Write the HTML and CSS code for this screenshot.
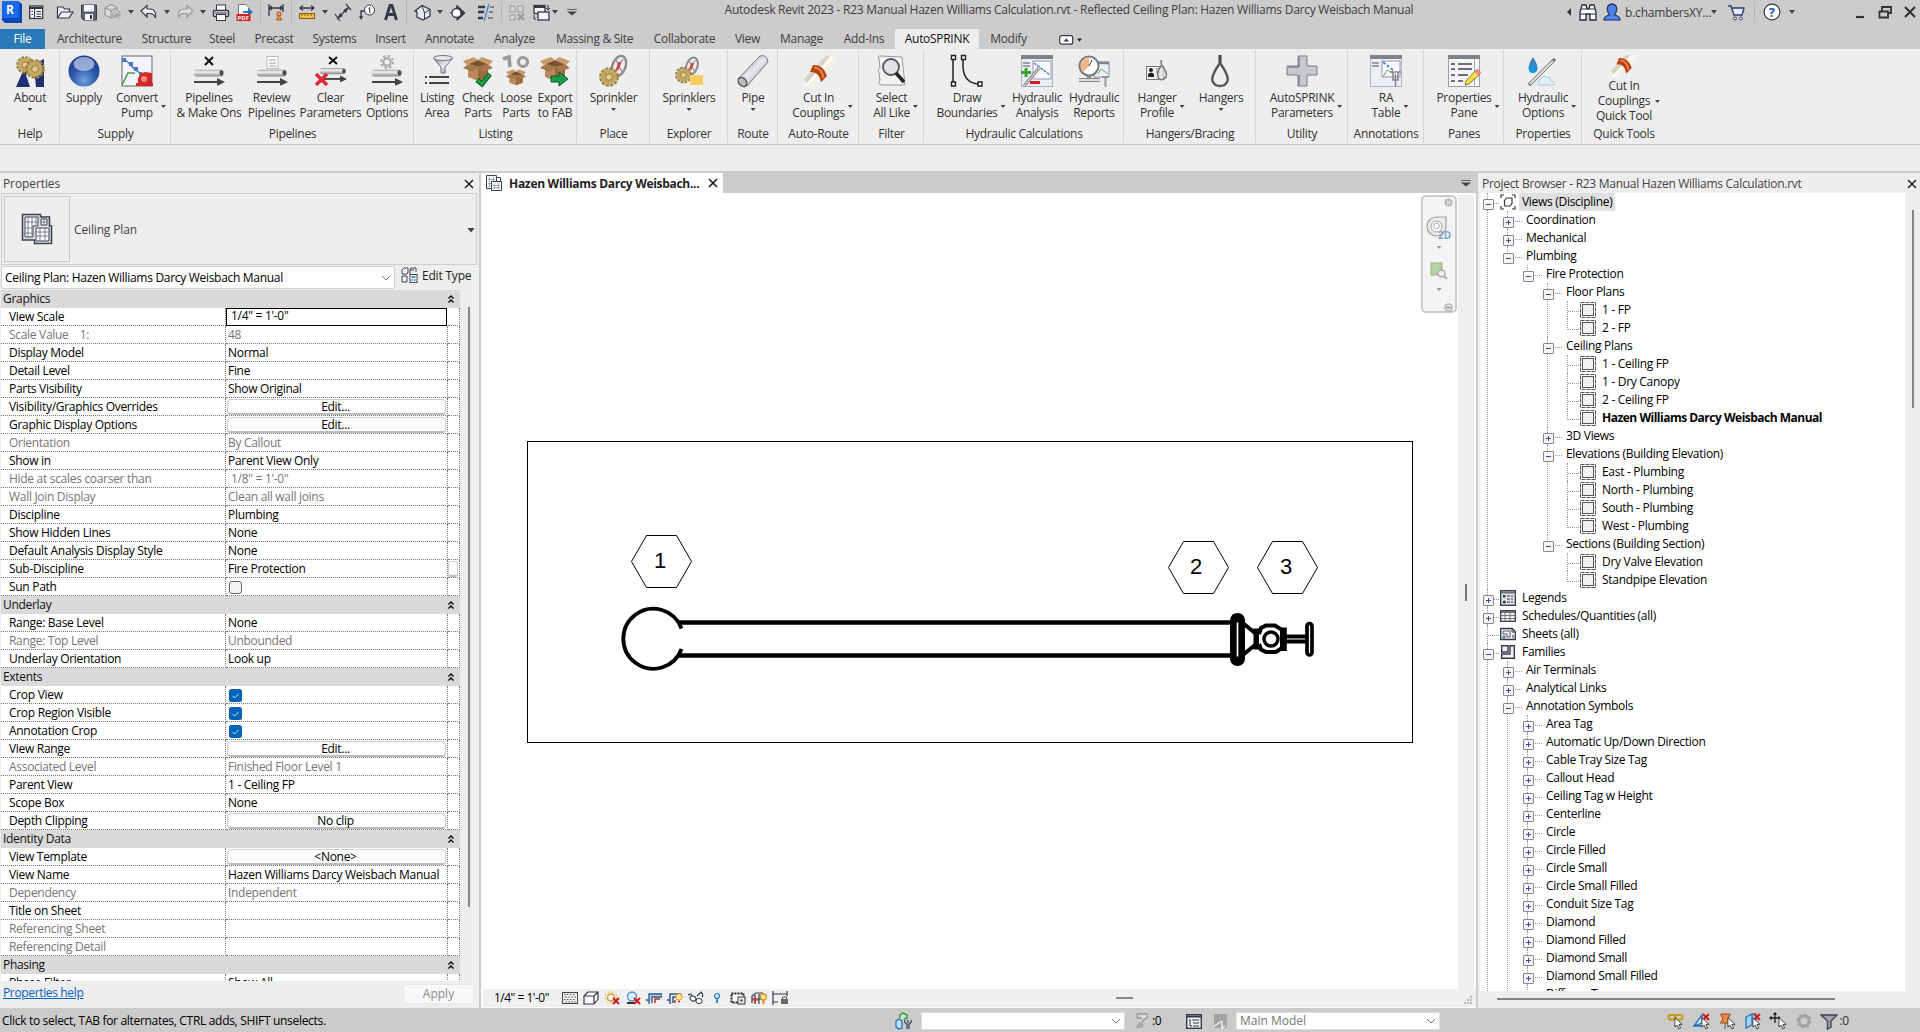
FILE: index.html
```html
<!DOCTYPE html>
<html lang="en">
<head>
<meta charset="utf-8">
<title>Autodesk Revit 2023</title>
<link rel="stylesheet" href="styles.css">
</head>
<body>
<svg class="defs" width="0" height="0" aria-hidden="true">
  <defs>
    <linearGradient id="gPipe" x1="0" y1="0" x2="0" y2="1"><stop offset="0" stop-color="#999"/><stop offset=".35" stop-color="#f4f4f4"/><stop offset="1" stop-color="#888"/></linearGradient>
    <linearGradient id="gTube" x1="0" y1="0" x2="1" y2="1"><stop offset="0" stop-color="#8d8f93"/><stop offset=".5" stop-color="#e9eaee"/><stop offset="1" stop-color="#85878c"/></linearGradient>
    <radialGradient id="gBall" cx=".5" cy=".8" r=".8"><stop offset="0" stop-color="#6fa3e0"/><stop offset=".5" stop-color="#2c57a8"/><stop offset="1" stop-color="#1c3a86"/></radialGradient>
    <linearGradient id="gDrop" x1="0" y1="0" x2="0" y2="1"><stop offset="0" stop-color="#4a7fae"/><stop offset="1" stop-color="#0a9be0"/></linearGradient>
    <symbol id="pipe" viewBox="0 0 32 16"><rect x="1" y="0" width="29" height="7" rx="2.500" fill="url(#gPipe)"/><ellipse cx="28.500" cy="3.500" rx="2" ry="3" fill="#444" stroke="#aaa" stroke-width=".7"/><path d="M1 12.500H26" stroke="#444" stroke-width="2.200"/><path d="M24 8.500L32 12.500L24 16.500Z" fill="#444"/></symbol>
    <symbol id="box" viewBox="0 0 32 30"><path d="M6 9L16 12L26 9V22L16 26L6 22Z" fill="#b98a5c"/><path d="M16 12L26 9V22L16 26Z" fill="#9a6b3f"/><path d="M6 9L16 5L26 9L16 12Z" fill="#7c5330"/><path d="M1 6L12 2L16 5L5 10ZM31 6L20 2L16 5L27 10Z" fill="#c79a6c"/><path d="M5 10L16 12L11 17L1 13ZM27 10L16 12L21 17L31 13Z" fill="#a87747"/></symbol>
    <symbol id="gear" viewBox="0 0 24 24"><circle cx="12" cy="12" r="9.500" fill="#c3a763"/><circle cx="12" cy="12" r="10.500" fill="none" stroke="#9c8240" stroke-width="2.600" stroke-dasharray="4.100 1.400"/><circle cx="12" cy="12" r="4" fill="#e0cb8c" stroke="#8b7337"/></symbol>
    <symbol id="ring" viewBox="0 0 20 26"><ellipse cx="11" cy="12" rx="6.500" ry="10.500" transform="rotate(20 11 12)" fill="#eee" stroke="#8b8b8b" stroke-width="2.400"/><path d="M7 4L15 20M15 5L7 19" stroke="#999" stroke-width="1.500"/><path d="M12 8L9 16" stroke="#d33" stroke-width="2.600"/></symbol>
    <symbol id="coupling" viewBox="0 0 32 32"><path d="M1 24L24 0H32V7L8 32H1Z" fill="#f4f2e2"/><path d="M1 24L24 0L27 1.500L4 28Z" fill="#d6d4c0"/><path d="M4 30L29 3" stroke="#fff" stroke-width="2"/><path d="M10 10Q20 9 24 21L18 27Q16 16 7 17Z" fill="#b8410f"/><path d="M11 12.500Q19 13 20.500 23" stroke="#e98450" stroke-width="2" fill="none"/></symbol>
    <symbol id="cursor" viewBox="0 0 10 14"><path d="M1 .5V11L3.500 8.800L5.300 13L7.300 12.100L5.500 8H9Z" fill="#fff" stroke="#333"/></symbol>
    <symbol id="redx" viewBox="0 0 8 8"><path d="M1 1L7 7M7 1L1 7" stroke="#d01818" stroke-width="2"/></symbol>
    <symbol id="view" viewBox="0 0 16 16"><rect x=".5" y=".5" width="15" height="15" fill="none" stroke="#555" stroke-dasharray="4 1"/><rect x="2.500" y="2.500" width="11" height="11" fill="#f1f1f1" stroke="#555"/></symbol>
    <symbol id="chev" viewBox="0 0 8 10"><path d="M1.500 4.500L4 2L6.500 4.500M1.500 8.500L4 6L6.500 8.500" fill="none" stroke="#000" stroke-width="1.300"/></symbol>
    <symbol id="plan" viewBox="0 0 32 32"><path d="M1.500 1.500H19.500V4H28.500V13H30.500V30.500H13.500V27H1.500Z" fill="#dfe3ea" stroke="#3d4351" stroke-width="1.600"/><path d="M4 4H17V13H12V24H4ZM20 6H26V12H20ZM15 15H28V28H15Z" fill="#f8f8fa" stroke="#3d4351"/><path d="M7 4V24M11 4V24M15 4V13M4 9H17M4 15H12M4 20H12M23 6V12M20 9H26M19 15V28M24 15V28M15 19H28M15 23H28" stroke="#737884" stroke-width=".9"/></symbol>
    <symbol id="plansm" viewBox="0 0 16 16"><path d="M.5.500H10.500V2.500H14.500V6.500H15.500V15.500H5.500V13.500H.5Z" fill="#f4f5f8" stroke="#3d4351"/><path d="M5.500 13V6.500H15M10.500 2.500V6.500" fill="none" stroke="#3d4351"/><path d="M3.500 2V12M7.500 2V6M2 4.500H9M2 8.500H5M8.500 8V14M12.500 8V14M7 10.500H14M7 12.800H14" stroke="#9a9eaa" stroke-width=".8"/></symbol>
    <symbol id="combo" viewBox="0 0 10 6"><path d="M1 1L5 5L9 1" fill="none" stroke="#777"/></symbol>
  </defs>
</svg>

<header class="titlebar">
  <div class="qat">
    <svg class="logo" viewBox="0 0 20 23"><path d="M0 1H16L20 4V23H3L0 20Z" fill="#0b49b5"/><rect x="0" y="1" width="17" height="17" fill="#1769ee"/><text x="4" y="14" font-size="12" font-weight="700" fill="#fff">R</text></svg>
    <svg viewBox="0 0 20 20"><rect x="3.700" y="4" width="13" height="12.500" fill="#f4f4f4" stroke="#333a46" stroke-width="1.300"/><path d="M4 6H17" stroke="#333a46" stroke-width="2"/><path d="M8.500 7V16M10.500 9.500H15M10.500 12H15M10.500 14.500H15M5.500 9.500H7M5.500 12.500H7" stroke="#333a46"/></svg>
    <svg class="gap5" viewBox="0 0 20 20"><path d="M2.500 16V5H8L9.500 7H14.500V10M2.500 16L6.500 10H18L14 16Z" fill="#eef0f4" stroke="#333a46" stroke-width="1.200"/></svg>
    <svg viewBox="0 0 20 20"><path d="M2.500 3H17.500V18H4.500L2.500 16Z" fill="#5b6270" stroke="#333a46"/><rect x="5" y="3" width="10" height="6.500" fill="#f5f5f5"/><rect x="6" y="12" width="8" height="6" fill="#fff"/><rect x="11" y="13" width="2" height="4" fill="#333"/></svg>
    <svg viewBox="0 0 20 20"><path d="M2 6L8 2.500L14 6V13L8 16L2 13ZM2 6L8 9L14 6M8 9V16" fill="#ddd" stroke="#8c8c8c"/><circle cx="13.500" cy="13" r="4.500" fill="#a6a6a6"/><path d="M11 13A2.500 2.500 0 0 1 16 12M16 14A2.500 2.500 0 0 1 11 15" stroke="#e6e6e6" fill="none"/></svg>
    <i class="arr"></i>
    <svg viewBox="0 0 20 20"><path d="M2 9L8 3.500V7H12Q17.500 8 16.500 16Q15 11.500 11 11.500H8V15Z" fill="#f2f2f2" stroke="#333a46" stroke-width="1.200"/></svg>
    <i class="arr"></i>
    <svg viewBox="0 0 20 20"><path d="M18 9L12 3.500V7H8Q2.500 8 3.500 16Q5 11.500 9 11.500H12V15Z" fill="#ddd" stroke="#999" stroke-width="1.200"/></svg>
    <i class="arr"></i>
    <svg viewBox="0 0 20 20"><rect x="5.500" y="3" width="9" height="6" fill="#fff" stroke="#333a46"/><rect x="2.500" y="8.500" width="15" height="6" rx="1" fill="#e8e8e8" stroke="#333a46" stroke-width="1.500"/><rect x="5.500" y="12.500" width="9" height="6" fill="#fff" stroke="#333a46"/><path d="M4 11H16" stroke="#333"/></svg>
    <svg viewBox="0 0 20 20"><path d="M3.500 2.500H11L14 5.500V18H3.500Z" fill="#fff" stroke="#777"/><path d="M8 9H13V6L18 10L13 14V11H8Z" fill="#1b79c0"/><rect x="1.500" y="12" width="14" height="7" fill="#d32020"/><text x="2.500" y="18" font-size="6" font-weight="700" fill="#fff">PDF</text></svg>
    <i class="vsep"></i>
    <svg viewBox="0 0 20 20"><path d="M3 2V14M17 2V10M3 6H17M6 4L3 6L6 8M14 4L17 6L14 8" fill="none" stroke="#333a46" stroke-width="1.300"/><circle cx="13" cy="12" r="1.800" fill="none" stroke="#cf5a2a" stroke-width="1.500"/><path d="M10 18H16L13 13Z" fill="#e48a2a" stroke="#b5521a" stroke-width=".8"/></svg>
    <i class="vsep"></i>
    <svg viewBox="0 0 20 20"><path d="M3 6H17M6 3.500L3 6L6 8.500M14 3.500L17 6L14 8.500" fill="none" stroke="#333a46" stroke-width="1.300"/><rect x="2.500" y="11.500" width="15" height="5" fill="#f5c14e" stroke="#8a5d0a"/><path d="M5 12V14M8 12V14M11 12V14M14 12V14" stroke="#8a5d0a"/></svg>
    <i class="arr"></i>
    <svg viewBox="0 0 20 20"><path d="M4 17L16 5M2 12L7 19M13 2L18 8" stroke="#333a46" stroke-width="1.200"/><path d="M4 17L10 14L7 11ZM16 5L10 8L13 11Z" fill="#333a46"/></svg>
    <svg viewBox="0 0 20 20"><path d="M4 17V9H8" fill="none" stroke="#333a46" stroke-width="1.300"/><circle cx="12.500" cy="8" r="5" fill="#fff" stroke="#333a46"/><path d="M11.500 6.500L12.800 5.500V11" stroke="#333" fill="none"/><path d="M2 14L4 18L6 14Z" fill="#333a46"/></svg>
    <svg viewBox="0 0 20 20"><path d="M4.500 18L9 3.500H11L15.500 18M6.500 12.500H14" fill="none" stroke="#333a46" stroke-width="2.800"/></svg>
    <i class="vsep"></i>
    <svg viewBox="0 0 20 20"><path d="M3 9L10 3.500L18 7.500V14L11 18L5 15V10Z" fill="#e4e7ee" stroke="#333a46" stroke-width="1.300"/><path d="M3 9L10 3.500L12.500 11V17M12.500 11L18 7.500" fill="none" stroke="#333a46"/></svg>
    <i class="arr"></i>
    <svg viewBox="0 0 20 20"><path d="M2 11H6M9 3L9 7M9 3.500L17 11L9 18.500Z" fill="#333a46" stroke="#333a46"/><circle cx="8.500" cy="11" r="4.500" fill="#fff" stroke="#333a46" stroke-width="1.300"/></svg>
    <svg class="gap1" viewBox="0 0 20 20"><path d="M2 5H9M2 10H8M2 16H7" stroke="#333a46" stroke-width="2.600"/><path d="M14 5H18M13 10H17M12 16H17" stroke="#333a46"/><path d="M13 2L8 19" stroke="#3b8bd0" stroke-width="1.300"/></svg>
    <i class="vsep"></i>
    <svg viewBox="0 0 20 20"><path d="M3 4H8V10H3ZM11 4H16V10H11ZM3 13H8V18H3Z" fill="#d8d8d8" stroke="#999"/><path d="M11 12L17 18M17 12L11 18" stroke="#999" stroke-width="2"/></svg>
    <svg viewBox="0 0 20 20"><rect x="3" y="3.500" width="11" height="8" fill="#f4f4f4" stroke="#333a46" stroke-width="1.300"/><path d="M3 5H14" stroke="#333a46" stroke-width="2"/><rect x="7" y="10" width="11" height="8" fill="#f4f4f4" stroke="#333a46" stroke-width="1.300"/><path d="M17 3V8M15 6L17 8L19 6M3 13V17H5" fill="none" stroke="#333a46"/></svg>
    <i class="arr tight"></i>
    <i class="arr bar"></i>
  </div>
  <div class="apptitle"><span>Autodesk Revit 2023 - R23 Manual Hazen Williams Calculation.rvt - Reflected Ceiling Plan: Hazen Williams Darcy Weisbach Manual</span></div>
  <div class="account">
    <svg class="tri" viewBox="0 0 6 10"><path d="M5 1V9L1 5Z" fill="#333"/></svg>
    <svg class="i18" viewBox="0 0 18 18"><path d="M1 17V9L3 2H7L8 6H10L11 2H15L17 9V17H11V11H7V17Z" fill="#fff" stroke="#222a38" stroke-width="1.300"/><path d="M1 11H7M11 11H17M2 6H7M11 6H16" stroke="#222a38"/></svg>
    <svg class="i18 user" viewBox="0 0 18 18"><path d="M1 17Q1 13 6.500 12Q3 7 5 3Q9-1 13 3Q15 7 11.500 12Q17 13 17 17Z" fill="#4f83e8" stroke="#1d2e66" stroke-width="1.200"/></svg>
    <span class="uname">b.chambersXY...</span><i class="arr"></i>
    <svg class="i18 cart" viewBox="0 0 18 18"><path d="M1 3H4L7 12H15L17 5H5" fill="#e8ecf8" stroke="#2c3a78" stroke-width="1.400"/><circle cx="8" cy="15.500" r="1.500" fill="#fff" stroke="#2c3a78"/><circle cx="14" cy="15.500" r="1.500" fill="#fff" stroke="#2c3a78"/></svg>
    <i class="vsep"></i>
    <svg class="i18 help" viewBox="0 0 18 18"><circle cx="9" cy="9" r="7.900" fill="#fff" stroke="#333a46" stroke-width="1.200"/><text x="5.700" y="13.700" font-size="13" font-weight="700" fill="#1c51c4">?</text></svg>
    <i class="arr"></i>
    <svg class="win" viewBox="0 0 66 18"><path d="M2 14H10" stroke="#333" stroke-width="2.200"/><path d="M28 8V4H37V10H34M25.500 8.500H34V14.500H25.500Z" fill="none" stroke="#333" stroke-width="1.800"/><path d="M51 4L61 14M61 4L51 14" stroke="#333" stroke-width="2.200"/></svg>
  </div>
</header>

<nav class="tabs">
  <a class="file">File</a><a>Architecture</a><a>Structure</a><a>Steel</a><a>Precast</a><a>Systems</a><a>Insert</a><a>Annotate</a><a>Analyze</a><a>Massing &amp; Site</a><a>Collaborate</a><a>View</a><a>Manage</a><a>Add-Ins</a><a class="on">AutoSPRINK</a><a>Modify</a>
  <svg class="toggle" viewBox="0 0 24 10"><rect x=".7" y=".7" width="13" height="8.500" rx="2" fill="#fff" stroke="#333a46" stroke-width="1.200"/><path d="M4.500 6.500L7.200 3.500L10 6.500Z" fill="#333a46"/><path d="M18 3.500H23L20.500 6.800Z" fill="#222"/></svg>
</nav>

<section class="ribbon">
  <div class="panel p60"><div class="btns">
    <a class="btn g1"><svg viewBox="0 0 32 32"><path d="M30 4V32H2L10 14Z" fill="#1f2f70"/><path d="M12 20L20 12L22 32H16Z" fill="#eee"/><use href="#gear" x="2" y="1" width="18" height="18"/><use href="#gear" x="11" y="4" width="20" height="20"/></svg><b>About</b><i class="arr down"></i></a></div><h4>Help</h4></div>
  <div class="panel p111"><div class="btns">
    <a class="btn g48"><svg viewBox="0 0 32 32"><circle cx="16" cy="16" r="15.500" fill="url(#gBall)"/><ellipse cx="16" cy="9" rx="10.500" ry="7" fill="#cfdcf2" opacity=".65"/></svg><b>Supply</b></a>
    <a class="btn g58"><svg viewBox="0 0 32 32"><rect x="1" y="1" width="30" height="30" fill="#f3f4fb" stroke="#666"/><path d="M3 4L9 9L13 14L19 18" stroke="#4a78c8" stroke-width="1.500" fill="none"/><path d="M1 3h4v4h-4zM8 7h4v4h-4zM13 12h4v4h-4zM18 17h3v3h-3z" fill="#4a78c8"/><path d="M1 30L7 18H14" stroke="#4a9e4a" stroke-width="1.600" fill="none"/><path d="M15 31V28H17Q16 18 24 17L31 18V28H32V31Z" fill="#d22a22"/><circle cx="23" cy="24" r="3" fill="#f08b80"/></svg><b>Convert<br>Pump<i class="arr side"></i></b></a></div><h4>Supply</h4></div>
  <div class="panel p243"><div class="btns lead5">
    <a class="btn g68"><svg viewBox="0 0 32 32"><path d="M12 2L20 10M20 2L12 10" stroke="#111" stroke-width="2"/><use href="#pipe" x="0" y="14.500" width="32" height="16"/></svg><b>Pipelines<br>&amp; Make Ons</b></a>
    <a class="btn g57"><svg viewBox="0 0 32 32"><rect x="11" y="1.500" width="11" height="12" fill="#fff" stroke="#bbb"/><path d="M13 5H20M13 8H20M13 11H20" stroke="#999"/><use href="#pipe" x="0" y="14.500" width="32" height="16"/></svg><b>Review<br>Pipelines</b></a>
    <a class="btn g61"><svg viewBox="0 0 32 32"><path d="M14 2L22 9M22 2L14 9" stroke="#111" stroke-width="2"/><use href="#pipe" x="4" y="13" width="28" height="14"/><path d="M1 19L12 30M12 19L1 30" stroke="#e02838" stroke-width="3.500"/></svg><b>Clear<br>Parameters</b></a>
    <a class="btn g52"><svg viewBox="0 0 32 32"><circle cx="16" cy="7" r="3.700" fill="none" stroke="#aaa" stroke-width="2.200"/><circle cx="16" cy="7" r="6" fill="none" stroke="#aaa" stroke-width="2" stroke-dasharray="2.300 2.400"/><use href="#pipe" x="0" y="14.500" width="32" height="16"/></svg><b>Pipeline<br>Options</b></a></div><h4>Pipelines</h4></div>
  <div class="panel p163"><div class="btns lead3">
    <a class="btn g40"><svg viewBox="0 0 32 32"><path d="M13 4H31L24 12V18H20V12Z" fill="url(#gTube)" stroke="#70747c"/><ellipse cx="22" cy="3" rx="9.500" ry="2.500" fill="#e4e6ea" stroke="#70747c"/><path d="M8 22H28M8 28H28" stroke="#444" stroke-width="2"/><path d="M4 22H6M4 28H6" stroke="#444" stroke-width="2"/></svg><b>Listing<br>Area</b></a>
    <a class="btn g42"><svg viewBox="0 0 32 32"><use href="#box" width="32" height="30"/><path d="M15 25L20 29L28 19" stroke="#0d5c26" stroke-width="5" fill="none"/><path d="M15 25L20 29L28 19" stroke="#239a4a" stroke-width="3" fill="none"/></svg><b>Check<br>Parts</b></a>
    <a class="btn g34"><svg viewBox="0 0 32 32"><path d="M3 4L9 2L10 12" fill="none" stroke="#999" stroke-width="3.600"/><circle cx="23" cy="7" r="4.500" fill="none" stroke="#9a9a9a" stroke-width="3.200"/><use href="#box" x="5" y="13" width="22" height="20"/></svg><b>Loose<br>Parts</b></a>
    <a class="btn g44"><svg viewBox="0 0 32 32"><use href="#box" width="32" height="30"/><path d="M12 21H20V17L29 24L20 31V27H12Z" fill="#1d9a49" stroke="#0d5c26"/></svg><b>Export<br>to FAB</b></a></div><h4>Listing</h4></div>
  <div class="panel p73"><div class="btns"><a class="btn g1"><svg viewBox="0 0 32 32"><use href="#ring" x="9" y="-1" width="22" height="26"/><use href="#gear" x="1" y="12" width="20" height="20"/></svg><b>Sprinkler</b><i class="arr down"></i></a></div><h4>Place</h4></div>
  <div class="panel p78"><div class="btns"><a class="btn g1"><svg viewBox="0 0 32 32"><use href="#ring" x="9" y="1" width="18" height="22"/><use href="#gear" x="2" y="11" width="17" height="18"/><rect x="17" y="20" width="13" height="10" fill="#f6cf62"/></svg><b>Sprinklers</b><i class="arr down"></i></a></div><h4>Explorer</h4></div>
  <div class="panel p50"><div class="btns"><a class="btn g1"><svg viewBox="0 0 32 32"><path d="M1 24L23 1Q30-1 31 7L10 31Z" fill="url(#gTube)" stroke="#777"/><ellipse cx="5.500" cy="27" rx="3.700" ry="5" transform="rotate(-40 5.500 27)" fill="#bbb" stroke="#555" stroke-width="1.500"/></svg><b>Pipe</b><i class="arr down"></i></a></div><h4>Route</h4></div>
  <div class="panel p81"><div class="btns"><a class="btn g1"><svg viewBox="0 0 32 32"><use href="#coupling" width="32" height="32"/></svg><b>Cut In<br>Couplings<i class="arr side"></i></b></a></div><h4>Auto-Route</h4></div>
  <div class="panel p65"><div class="btns"><a class="btn g1"><svg viewBox="0 0 32 32"><path d="M3 4Q1 1 4 1L26 2L29 30L5 30Q1 28 4 26L3 18Q1 14 4 13Z" fill="#f2f2f2" stroke="#999"/><circle cx="15" cy="12" r="8" fill="#dfe3e8" stroke="#555" stroke-width="1.800"/><path d="M20 18L28 27" stroke="#222" stroke-width="3.500"/></svg><b>Select<br>All Like<i class="arr side"></i></b></a></div><h4>Filter</h4></div>
  <div class="panel p200"><div class="btns">
    <a class="btn g86"><svg viewBox="0 0 32 32"><path d="M2 3V29M12 3V12Q13 29 29 29" fill="none" stroke="#222" stroke-width="1.500"/><path d="M.5.500h4v4h-4zM10.500.500h4v4h-4zM.5 27h4v4h-4zM27 27h4v4h-4z" fill="#fff" stroke="#222" stroke-width="1.400"/></svg><b>Draw<br>Boundaries<i class="arr side"></i></b></a>
    <a class="btn g54"><svg viewBox="0 0 32 32"><rect x=".5" y=".5" width="31" height="31" fill="#eceff5" stroke="#aeb3bd"/><rect width="32" height="4" fill="#7d828c"/><rect x="12" y="6" width="18" height="18" fill="#f7f9fd" stroke="#99a"/><path d="M13 8L29 20" stroke="#5585c8" stroke-width="1.500" stroke-dasharray="3 1"/><path d="M2 8H9M2 11H9" stroke="#555"/><path d="M5 13V22M0 17.500H10" stroke="#3fa32f" stroke-width="3"/><path d="M3 31L18 13" stroke="#888" stroke-width="3"/><path d="M3 31L18 13" stroke="#eee"/><rect x="9" y="26" width="10" height="3" fill="#c8202a"/></svg><b>Hydraulic<br>Analysis</b></a>
    <a class="btn g60"><svg viewBox="0 0 32 32"><rect x="16" y="7" width="15" height="15" fill="#eef1f7" stroke="#8a8f9a"/><path d="M16 8H31" stroke="#7d828c" stroke-width="2.500"/><circle cx="11" cy="11" r="9.500" fill="#fff" stroke="#777" stroke-width="2"/><path d="M5 17A8.500 8.500 0 0 1 11 3V11Z" fill="#f2b483"/><path d="M11 11L14 5" stroke="#333"/><path d="M11 20V24M1 25H22" stroke="#888" stroke-width="4"/><path d="M1 25H22" stroke="#fff" stroke-width="1.500"/><path d="M24 22H31M27.500 22V32" stroke="#999" stroke-width="2"/><path d="M20 19L23 14L30 19" fill="none" stroke="#62b062"/></svg><b>Hydraulic<br>Reports</b></a></div><h4>Hydraulic Calculations</h4></div>
  <div class="panel p132"><div class="btns">
    <a class="btn g66"><svg viewBox="0 0 32 32"><rect x="5.500" y="11.500" width="17" height="13" fill="#eef0f2" stroke="#777"/><circle cx="10" cy="15" r="2" fill="#222"/><path d="M7 22V19Q10 16 13 19V22Z" fill="#222"/><path d="M15 14H19M15 17H19" stroke="#666"/><path d="M20 5L20.500 10Q14 19 18 24Q22 26 25 22Q27 18 20.500 10" fill="#ddd" fill-opacity=".7" stroke="#777" stroke-width="1.500"/></svg><b>Hanger<br>Profile<i class="arr side"></i></b></a>
    <a class="btn g64"><svg viewBox="0 0 32 32"><path d="M15 0V8" stroke="#444" stroke-width="3"/><path d="M15 8Q5 22 8 27Q10 31 15 31Q20 31 22 27Q25 22 15 8Z" fill="none" stroke="#555" stroke-width="2.400"/></svg><b>Hangers</b><i class="arr down"></i></a></div><h4>Hangers/Bracing</h4></div>
  <div class="panel p92"><div class="btns"><a class="btn g1"><svg viewBox="0 0 32 32"><path d="M12 1H21V11H31V20H21V31H12V20H1V11H12Z" fill="#c6c9cf" stroke="#777b83"/><path d="M13 12V2M2 12H13M13 30V20" stroke="#8b8f97" stroke-width="2"/></svg><b>AutoSPRINK<br>Parameters<i class="arr side"></i></b></a></div><h4>Utility</h4></div>
  <div class="panel p76"><div class="btns"><a class="btn g1"><svg viewBox="0 0 32 32"><rect x=".5" y=".5" width="31" height="31" fill="#eceff5" stroke="#aeb3bd"/><rect width="32" height="4" fill="#7d828c"/><rect x="12" y="6" width="18" height="16" fill="#f7f9fd" stroke="#99a"/><path d="M13 7L24 16" stroke="#5585c8" stroke-width="2" stroke-dasharray="3 2"/><path d="M13 22L17 15L24 19" fill="none" stroke="#62b062"/><path d="M2 8H9M2 11H9" stroke="#555"/><path d="M20 17H31M23 17V25H28V17M25.500 19V32" stroke="#888" stroke-width="1.500" fill="none"/></svg><b>RA<br>Table<i class="arr side"></i></b></a></div><h4>Annotations</h4></div>
  <div class="panel p80"><div class="btns"><a class="btn g1"><svg viewBox="0 0 32 32"><rect x=".5" y=".5" width="31" height="31" fill="#f4f5f8" stroke="#999ea8"/><rect width="32" height="4" fill="#7d828c"/><path d="M26.500 4V31" stroke="#aaa"/><path d="M3 9H7M10 9H24M3 14H7M10 14H24M3 20H7M10 20H20M3 26H7M10 26H15" stroke="#444" stroke-width="1.600"/><path d="M17 30L18 26L28 15L32 19L21 29Z" fill="#f6e04a" stroke="#8a7a20"/><path d="M28 15L32 19" stroke="#e88" stroke-width="4"/></svg><b>Properties<br>Pane<i class="arr side"></i></b></a></div><h4>Panes</h4></div>
  <div class="panel p78"><div class="btns"><a class="btn g1"><svg viewBox="0 0 32 32"><path d="M6 2Q11 10 10.500 13.500Q10 18 6 18Q2 18 1.500 13.500Q1 10 6 2Z" fill="url(#gDrop)"/><path d="M3 29L27 5" stroke="#777" stroke-width="3.600" stroke-linecap="round"/><path d="M3 29L26 6" stroke="#e4e4e4" stroke-width="1.800"/><path d="M13 30Q9 27 13 25Q14 20 20 22Q24 22 24 26Q29 27 27 30Z" fill="#dff1f8" stroke="#a8c8d4"/></svg><b>Hydraulic<br>Options<i class="arr side"></i></b></a></div><h4>Properties</h4></div>
  <div class="panel p84 last"><div class="btns"><a class="btn g1 tall"><svg viewBox="0 0 32 22"><use href="#coupling" x="2" y="-6" width="29" height="29"/></svg><b>Cut In<br>Couplings<i class="arr side"></i><br>Quick Tool</b></a></div><h4>Quick Tools</h4></div>
</section>
<div class="optbar"></div>

<main class="work">
  <aside class="props">
    <div class="phead"><span>Properties</span><svg class="x" viewBox="0 0 10 10"><path d="M1 1L9 9M9 1L1 9" stroke="#222" stroke-width="1.500"/></svg></div>
    <div class="typebox"><div class="thumb"><svg viewBox="0 0 32 32"><use href="#plan" width="32" height="32"/></svg></div><span>Ceiling Plan</span><i class="arr big"></i></div>
    <div class="inst"><div class="combo"><span>Ceiling Plan: Hazen Williams Darcy Weisbach Manual</span><svg class="cb" viewBox="0 0 10 6"><use href="#combo"/></svg></div>
      <svg class="et" viewBox="0 0 17 16"><path d="M1 3L3 1H7V6L6 7H1ZM9 3L10 1H15V5M9 3V7M1 9H6V15H1ZM9 3H13" fill="#f5f5f5" stroke="#3d4351"/><rect x="9" y="7.500" width="7" height="8" fill="#fff" stroke="#3d4351"/><path d="M10.500 10H14.500M10.500 13H12M13 13H14.500" stroke="#1a6fc0" stroke-width="1.400"/></svg><span class="ett">Edit Type</span></div>
    <div class="gridwrap"><div class="grid">
      <div class="sec">Graphics<svg viewBox="0 0 8 10"><use href="#chev"/></svg></div>
      <div class="row"><span>View Scale</span><span class="sel">1/4" = 1'-0"</span><i></i></div>
      <div class="row dim"><span>Scale Value&nbsp;&nbsp;&nbsp; 1:</span><span>48</span><i></i></div>
      <div class="row"><span>Display Model</span><span>Normal</span><i></i></div>
      <div class="row"><span>Detail Level</span><span>Fine</span><i></i></div>
      <div class="row"><span>Parts Visibility</span><span>Show Original</span><i></i></div>
      <div class="row"><span>Visibility/Graphics Overrides</span><span class="cell"><button>Edit...</button></span><i></i></div>
      <div class="row"><span>Graphic Display Options</span><span class="cell"><button>Edit...</button></span><i></i></div>
      <div class="row dim"><span>Orientation</span><span>By Callout</span><i></i></div>
      <div class="row"><span>Show in</span><span>Parent View Only</span><i></i></div>
      <div class="row dim"><span>Hide at scales coarser than</span><span class="in">1/8" = 1'-0"</span><i></i></div>
      <div class="row dim"><span>Wall Join Display</span><span>Clean all wall joins</span><i></i></div>
      <div class="row"><span>Discipline</span><span>Plumbing</span><i></i></div>
      <div class="row"><span>Show Hidden Lines</span><span>None</span><i></i></div>
      <div class="row"><span>Default Analysis Display Style</span><span>None</span><i></i></div>
      <div class="row"><span>Sub-Discipline</span><span>Fire Protection</span><i><button class="mini"></button></i></div>
      <div class="row"><span>Sun Path</span><span class="ck"><em></em></span><i></i></div>
      <div class="sec">Underlay<svg viewBox="0 0 8 10"><use href="#chev"/></svg></div>
      <div class="row"><span>Range: Base Level</span><span>None</span><i></i></div>
      <div class="row dim"><span>Range: Top Level</span><span>Unbounded</span><i></i></div>
      <div class="row"><span>Underlay Orientation</span><span>Look up</span><i></i></div>
      <div class="sec">Extents<svg viewBox="0 0 8 10"><use href="#chev"/></svg></div>
      <div class="row"><span>Crop View</span><span class="ck"><svg viewBox="0 0 13 13"><rect width="13" height="13" rx="2.500" fill="#0063b8"/><path d="M3.500 6.800L5.700 9L9.700 4.800" fill="none" stroke="#cfe4f7"/></svg></span><i></i></div>
      <div class="row"><span>Crop Region Visible</span><span class="ck"><svg viewBox="0 0 13 13"><rect width="13" height="13" rx="2.500" fill="#0063b8"/><path d="M3.500 6.800L5.700 9L9.700 4.800" fill="none" stroke="#cfe4f7"/></svg></span><i></i></div>
      <div class="row"><span>Annotation Crop</span><span class="ck"><svg viewBox="0 0 13 13"><rect width="13" height="13" rx="2.500" fill="#0063b8"/><path d="M3.500 6.800L5.700 9L9.700 4.800" fill="none" stroke="#cfe4f7"/></svg></span><i></i></div>
      <div class="row"><span>View Range</span><span class="cell"><button>Edit...</button></span><i></i></div>
      <div class="row dim"><span>Associated Level</span><span>Finished Floor Level 1</span><i></i></div>
      <div class="row"><span>Parent View</span><span>1 - Ceiling FP</span><i></i></div>
      <div class="row"><span>Scope Box</span><span>None</span><i></i></div>
      <div class="row"><span>Depth Clipping</span><span class="cell"><button>No clip</button></span><i></i></div>
      <div class="sec">Identity Data<svg viewBox="0 0 8 10"><use href="#chev"/></svg></div>
      <div class="row"><span>View Template</span><span class="cell"><button>&lt;None&gt;</button></span><i></i></div>
      <div class="row"><span>View Name</span><span>Hazen Williams Darcy Weisbach Manual</span><i></i></div>
      <div class="row dim"><span>Dependency</span><span>Independent</span><i></i></div>
      <div class="row"><span>Title on Sheet</span><span></span><i></i></div>
      <div class="row dim"><span>Referencing Sheet</span><span></span><i></i></div>
      <div class="row dim"><span>Referencing Detail</span><span></span><i></i></div>
      <div class="sec">Phasing<svg viewBox="0 0 8 10"><use href="#chev"/></svg></div>
      <div class="row"><span>Phase Filter</span><span>Show All</span><i></i></div>
    </div><div class="vthumb"></div></div>
    <div class="pfoot"><a>Properties help</a><button class="apply">Apply</button></div>
  </aside>

  <section class="canvas">
    <div class="vtabs"><div class="vtab"><svg class="i16" viewBox="0 0 16 16"><use href="#plansm"/></svg><span>Hazen Williams Darcy Weisbach...</span><svg class="x" viewBox="0 0 10 10"><path d="M1 1L9 9M9 1L1 9" stroke="#111" stroke-width="1.500"/></svg></div><i class="arr bar"></i></div>
    <div class="sheetrow">
      <div class="sheet">
        <svg class="drawing" viewBox="481 193 977 796" width="977" height="796">
          <rect x="527.500" y="441.500" width="885" height="301" fill="none" stroke="#000"/>
          <g fill="none" stroke="#000"><path d="M646.500 535.500H676.500L691.500 561.500L676.500 587.500H646.500L631.500 561.500Z"/><path d="M1183.500 541.500H1213.500L1228.500 567.500L1213.500 593.500H1183.500L1168.500 567.500Z"/><path d="M1272.500 541.500H1302.500L1317.500 567.500L1302.500 593.500H1272.500L1257.500 567.500Z"/></g>
          <g class="tag"><text x="660" y="568">1</text><text x="1196" y="574">2</text><text x="1286" y="574">3</text></g>
          <path d="M681.500 628.500A30 30 0 1 0 681.500 649" fill="none" stroke="#000" stroke-width="3.800"/>
          <path d="M679 622.500H1231M679 655.500H1231" stroke="#000" stroke-width="4.600"/>
          <path d="M1230 620Q1231 613 1237.500 613Q1244 613 1245 620V659Q1244 666 1237.500 666Q1231 666 1230 659Z" fill="#000"/>
          <path d="M1237.500 622.500V656.500" stroke="#fff" stroke-width="1.700"/>
          <path d="M1244 624L1255 633M1244 654L1255 645" stroke="#000" stroke-width="4"/>
          <path d="M1253.500 628.500H1260V649.500H1253.500Z" fill="#000"/>
          <path d="M1259 634L1261 628L1266 625.500H1275L1282 630V648L1276 652H1266L1261 649.500L1259 644" fill="#fff" stroke="#000" stroke-width="4"/>
          <circle cx="1271" cy="639" r="7" fill="#fff" stroke="#000" stroke-width="3.400"/>
          <path d="M1281 627.500H1286.800V651H1281Z" fill="#000"/>
          <path d="M1286 636.500H1306M1286 641.500H1306" stroke="#000" stroke-width="3.800"/>
          <rect x="1307" y="623.500" width="5" height="31.500" rx="2.500" fill="#fff" stroke="#000" stroke-width="3.700"/>
        </svg>
        <div class="navbar">
          <svg class="nclose" viewBox="0 0 9 9"><circle cx="4.500" cy="4.500" r="4" fill="#bbb"/><path d="M3 3L6 6M6 3L3 6" stroke="#fff"/></svg>
          <svg class="wheel" viewBox="0 0 26 25"><path d="M10 1H20V11A9.500 9.500 0 1 1 10 1Z" fill="#e9ebef" stroke="#a2a2a2" stroke-width="1.200"/><circle cx="10.500" cy="10.500" r="5.500" fill="#fff" stroke="#a2a2a2"/><circle cx="10.500" cy="10" r="2.800" fill="none" stroke="#a2a2a2"/><text x="12" y="23" font-size="10" font-weight="700" fill="#7fa5cc">2D</text></svg>
          <i class="arr gray"></i><i class="nsep"></i>
          <svg class="zoomi" viewBox="0 0 18 18"><rect x="1" y="1" width="11" height="12" fill="#b5d3a4" stroke="#93b584"/><circle cx="11.500" cy="11.500" r="3.500" fill="#eee" stroke="#aaa" stroke-width="1.400"/><path d="M14 14L17 17" stroke="#aaa" stroke-width="2"/></svg>
          <i class="arr gray"></i>
          <svg class="nclose low" viewBox="0 0 9 9"><circle cx="4.500" cy="4.500" r="3.800" fill="#ddd" stroke="#aaa"/><path d="M2.500 4.500H6.500" stroke="#888"/></svg>
        </div>
      </div>
      <div class="vscroll"><i></i></div>
    </div>
    <div class="viewctl"><span class="scale">1/4" = 1'-0"</span>
      <svg viewBox="0 0 16 14"><rect x=".5" y="1.500" width="15" height="11" fill="#eee" stroke="#444"/><path d="M2 3.500H14M2 8.500H14" stroke="#555" stroke-dasharray="1.500 1.500"/><path d="M3.500 6H14M3.500 11H14" stroke="#555" stroke-dasharray="1.500 1.500"/></svg>
      <svg viewBox="0 0 16 14"><path d="M1 5L5 1H15V8L11 13H1ZM1 5H11V13M11 5L15 1" fill="#fff" stroke="#333a46" stroke-width="1.200"/></svg>
      <svg viewBox="0 0 16 14"><circle cx="7" cy="6.500" r="3.500" fill="#fff" stroke="#d9a018" stroke-width="1.500"/><circle cx="7" cy="6.500" r="5.800" fill="none" stroke="#d9a018" stroke-dasharray="1.500 2.500"/><use href="#redx" x="8" y="6" width="8" height="8"/></svg>
      <svg class="m5" viewBox="0 0 16 14"><circle cx="7" cy="5.500" r="4.500" fill="#d8ecfa" stroke="#4a8fc8" stroke-width="1.300"/><path d="M2 12H9" stroke="#333" stroke-width="2"/><use href="#redx" x="8" y="6" width="8" height="8"/></svg>
      <svg viewBox="0 0 16 14"><path d="M3 13V9H0M3 9V3H16V6H6V12" fill="#bcd" stroke="#2a5a90" stroke-width="1.300"/><path d="M9 12V8H14" stroke="#c22" fill="none" stroke-width="1.500"/></svg>
      <svg viewBox="0 0 16 14"><path d="M3 13V9H0M3 9V3H14M6 12V6H10" fill="none" stroke="#2a5a90" stroke-width="1.500"/><circle cx="12" cy="6" r="3.200" fill="#ffe9a8" stroke="#e0921c"/><path d="M11 10.500H13M8 12V9" stroke="#c22" stroke-width="1.500"/></svg>
      <svg viewBox="0 0 16 14"><path d="M0 4L3 3Q4 8 7 7L9 9M9 5L13 1Q16 4 14 6" fill="none" stroke="#333a46" stroke-width="1.200"/><ellipse cx="5" cy="7.500" rx="3" ry="2.400" fill="#fff" stroke="#333a46" transform="rotate(25 5 7.500)"/><ellipse cx="11" cy="10" rx="3.200" ry="2.500" fill="#fff" stroke="#333a46"/></svg>
      <svg viewBox="0 0 16 14"><circle cx="8" cy="5" r="2.500" fill="#d3eaff" stroke="#2a7ad0" stroke-width="1.200"/><path d="M8 8V12" stroke="#2a7ad0" stroke-width="1.800"/></svg>
      <svg viewBox="0 0 16 14"><rect x="1.500" y="2.500" width="12" height="9" fill="#fff" stroke="#222" stroke-width="2" stroke-dasharray="2 1"/><rect x="8" y="6" width="7" height="7" fill="#eee" stroke="#333"/><circle cx="11.500" cy="9.500" r="1.300" fill="#555"/></svg>
      <svg viewBox="0 0 16 14"><path d="M1 12V5L5 2H12M1 8H11M4 4V13M8 3V13" fill="none" stroke="#333a46" stroke-width="1.200"/><path d="M1 9H7M4 5V12" stroke="#d22" /><circle cx="12.500" cy="6" r="3" fill="#ffe9a8" stroke="#e0921c" stroke-width="1.300"/><path d="M12.500 9V13" stroke="#d88a1c" stroke-width="2"/></svg>
      <svg viewBox="0 0 16 14"><path d="M1 0V14M15 0V5M1 3H15M1 11H6" stroke="#333a46" stroke-width="1.200"/><rect x="9" y="8" width="7" height="5" fill="#666"/><path d="M10.500 8V6H14.500V8" fill="none" stroke="#555"/></svg>
      <i class="hthumb"></i>
      <svg class="grip" viewBox="0 0 9 9"><path d="M6 0h2v2h-2zM3 3h2v2h-2zM6 3h2v2h-2zM0 6h2v2h-2zM3 6h2v2h-2zM6 6h2v2h-2z" fill="#bbb"/></svg>
    </div>
  </section>

  <aside class="browser">
    <div class="phead"><span>Project Browser - R23 Manual Hazen Williams Calculation.rvt</span><svg class="x" viewBox="0 0 10 10"><path d="M1 1L9 9M9 1L1 9" stroke="#222" stroke-width="1.500"/></svg></div>
    <div class="treewrap"><div class="treebox">
    <ul class="tree">
      <li><p class="m ic"><svg viewBox="0 0 16 16"><path d="M1 4V1H4M12 1H15V4M1 12V15H4M12 15H15V12" fill="none" stroke="#333a46" stroke-width="1.200"/><path d="M4.500 6.500L6.500 4H12V9.500L10 12H4.500Z" fill="#fff" stroke="#333a46" stroke-width="1.200"/></svg><span class="hl">Views (Discipline)</span></p>
        <ul>
          <li><p class="pl">Coordination</p></li>
          <li><p class="pl">Mechanical</p></li>
          <li><p class="m">Plumbing</p>
            <ul><li><p class="m">Fire Protection</p>
              <ul>
                <li><p class="m">Floor Plans</p><ul><li><p class="ic"><svg><use href="#view"/></svg>1 - FP</p></li><li><p class="ic"><svg><use href="#view"/></svg>2 - FP</p></li></ul></li>
                <li><p class="m">Ceiling Plans</p><ul><li><p class="ic"><svg><use href="#view"/></svg>1 - Ceiling FP</p></li><li><p class="ic"><svg><use href="#view"/></svg>1 - Dry Canopy</p></li><li><p class="ic"><svg><use href="#view"/></svg>2 - Ceiling FP</p></li><li><p class="ic cur"><svg><use href="#view"/></svg>Hazen Williams Darcy Weisbach Manual</p></li></ul></li>
                <li><p class="pl">3D Views</p></li>
                <li><p class="m">Elevations (Building Elevation)</p><ul><li><p class="ic"><svg><use href="#view"/></svg>East - Plumbing</p></li><li><p class="ic"><svg><use href="#view"/></svg>North - Plumbing</p></li><li><p class="ic"><svg><use href="#view"/></svg>South - Plumbing</p></li><li><p class="ic"><svg><use href="#view"/></svg>West - Plumbing</p></li></ul></li>
                <li><p class="m">Sections (Building Section)</p><ul><li><p class="ic"><svg><use href="#view"/></svg>Dry Valve Elevation</p></li><li><p class="ic"><svg><use href="#view"/></svg>Standpipe Elevation</p></li></ul></li>
              </ul></li></ul></li>
        </ul></li>
      <li><p class="pl ic"><svg viewBox="0 0 16 16"><rect x=".7" y=".7" width="14.600" height="14.600" fill="#dfe3e8" stroke="#333a46" stroke-width="1.300"/><path d="M1 2.500H15" stroke="#69707e" stroke-width="2"/><path d="M7 6H13M7 9H13M7 12H13" stroke="#333a46" stroke-dasharray="3 1"/><rect x="3" y="5" width="2.500" height="2.500" fill="#333a46"/><circle cx="4.300" cy="12" r="1.600" fill="#333a46"/></svg>Legends</p></li>
      <li><p class="pl ic"><svg viewBox="0 0 16 16"><rect x=".7" y="2.700" width="14.600" height="10.600" fill="#f4f4f4" stroke="#333a46" stroke-width="1.300"/><path d="M1 4H15" stroke="#69707e" stroke-width="2"/><path d="M5 4V13M10 4V13M1 7.500H15M1 10.500H15" stroke="#777"/></svg>Schedules/Quantities (all)</p></li>
      <li><p class="ic"><svg viewBox="0 0 16 16"><path d="M.7 2.500H12L15.300 5.500V13.500H.7Z" fill="#f0f1f5" stroke="#333a46" stroke-width="1.300"/><path d="M3 5H10V11H7V8H3ZM3 10H5V12H3Z" fill="none" stroke="#555d6c"/><path d="M12 2V6H15M13 9V12" stroke="#333a46" fill="none"/></svg>Sheets (all)</p></li>
      <li class="more"><p class="m ic"><svg viewBox="0 0 16 16"><path d="M1.700 1.700H8V8H1.700ZM10 1.700H14.300V14.300H1.700V10H10Z" fill="#f4f4f8" stroke="#333a46" stroke-width="1.400"/></svg>Families</p>
        <ul>
          <li><p class="pl">Air Terminals</p></li>
          <li><p class="pl">Analytical Links</p></li>
          <li class="more"><p class="m">Annotation Symbols</p>
            <ul><li><p class="pl">Area Tag</p></li><li><p class="pl">Automatic Up/Down Direction</p></li><li><p class="pl">Cable Tray Size Tag</p></li><li><p class="pl">Callout Head</p></li><li><p class="pl">Ceiling Tag w Height</p></li><li><p class="pl">Centerline</p></li><li><p class="pl">Circle</p></li><li><p class="pl">Circle Filled</p></li><li><p class="pl">Circle Small</p></li><li><p class="pl">Circle Small Filled</p></li><li><p class="pl">Conduit Size Tag</p></li><li><p class="pl">Diamond</p></li><li><p class="pl">Diamond Filled</p></li><li><p class="pl">Diamond Small</p></li><li><p class="pl">Diamond Small Filled</p></li><li><p class="pl">Diffuser Tag</p></li></ul></li>
        </ul></li>
    </ul></div><div class="bthumb"></div></div>
    <div class="bscroll"><i></i></div>
  </aside>
</main>

<footer class="status">
  <span class="msg">Click to select, TAB for alternates, CTRL adds, SHIFT unselects.</span>
  <svg viewBox="0 0 18 18"><path d="M1 9L4 7L7 9V16L4 17L1 15Z" fill="#bfe0f5" stroke="#1a6fc0" stroke-width="1.300"/><path d="M5 6V3L8 1L12 3V6L9 7" fill="#cdebc5" stroke="#3c9a3a" stroke-width="1.500"/><path d="M10 8Q9 11 12 12V17M16 8Q17 11 14 12V17M13 8V11" fill="none" stroke="#333a46" stroke-width="1.200"/></svg>
  <div class="scombo a"><svg class="cb" viewBox="0 0 10 6"><use href="#combo"/></svg></div>
  <svg class="s2" viewBox="0 0 18 18"><path d="M5 2H15V6L11 8L10 11M5 2V6H10" fill="#ddd" stroke="#999" stroke-width="1.300"/><path d="M3 16L7 10L12 12L10 16Z" fill="#aaa"/></svg><span class="cnt">:0</span>
  <svg class="s3" viewBox="0 0 18 18"><rect x="1.700" y="2.700" width="14.600" height="13.600" fill="#f0f0f4" stroke="#333a46" stroke-width="1.400"/><path d="M2 4.500H16" stroke="#333a46" stroke-width="2"/><path d="M7 8H14M8 11H14M8 14H14M4 8H6M5 8V14H7" stroke="#333a46" fill="none"/></svg>
  <svg class="s4" viewBox="0 0 18 18"><rect x="3" y="2" width="13" height="14" fill="#a4a4a4"/><path d="M2 15L11 9M11 9V16L14 14" stroke="#eee" stroke-width="1.500" fill="none"/></svg>
  <div class="scombo b"><span>Main Model</span><svg class="cb" viewBox="0 0 10 6"><use href="#combo"/></svg></div>
  <div class="sel-tools">
    <svg viewBox="0 0 18 18"><rect x="1.500" y="3" width="7" height="4.500" rx="2.200" fill="none" stroke="#c99a12" stroke-width="2"/><rect x="8.500" y="3" width="7" height="4.500" rx="2.200" fill="none" stroke="#c99a12" stroke-width="2"/><use href="#cursor" x="7" y="5" width="9" height="13"/></svg>
    <svg viewBox="0 0 18 18"><path d="M1 14L9 3V11ZM1 14H9" fill="#d3e8f8" stroke="#1a6fc0" stroke-width="1.300"/><use href="#redx" x="9" y="1" width="8" height="8"/><use href="#cursor" x="8" y="5" width="9" height="13"/></svg>
    <svg viewBox="0 0 18 18"><path d="M3 2H12V4L10.500 5V8L13 11H2L4.500 8V5L3 4Z" fill="#ea8a3c" stroke="#a5481a"/><path d="M7 11V17" stroke="#555"/><use href="#cursor" x="9" y="5" width="9" height="13"/></svg>
    <svg viewBox="0 0 18 18"><path d="M2 5L8 2V13L2 16ZM8 2H12V12" fill="#9fd0ee" stroke="#1a6fc0" stroke-width="1.200"/><use href="#redx" x="9" y="1" width="8" height="8"/><use href="#cursor" x="8" y="5" width="9" height="13"/></svg>
    <svg viewBox="0 0 18 18"><path d="M6 1V11M1 6H11M4.500 2.500L6 1L7.500 2.500M2.500 4.500L1 6L2.500 7.500M9.500 4.500L11 6" fill="none" stroke="#222" stroke-width="1.300"/><use href="#cursor" x="9" y="5" width="9" height="13"/></svg>
    <svg viewBox="0 0 18 18"><circle cx="9" cy="9" r="5" fill="none" stroke="#a2a2a2" stroke-width="3"/><circle cx="9" cy="9" r="6.500" fill="none" stroke="#a2a2a2" stroke-width="2" stroke-dasharray="2.500 2.500"/></svg>
    <svg viewBox="0 0 18 18"><path d="M1 3H17L11 9V15L7.500 17V9Z" fill="#9da3ad" stroke="#3d4351" stroke-width="1.300"/></svg>
    <span>:0</span>
  </div>
</footer>
</body>
</html>
```
FILE: styles.css
```css
* { box-sizing: border-box; }
body { margin: 0; width: 1920px; height: 1032px; overflow: hidden; display: flex; flex-direction: column; background: #cccccc; color: #000; font: 12px/18px "Open Sans", "Noto Sans", sans-serif; letter-spacing: -0.3px; white-space: nowrap; }
svg { display: block; flex: none; }
text { letter-spacing: 0; }
ul, p, h4 { margin: 0; padding: 0; list-style: none; font-weight: 400; }
b { font-weight: 400; }
button { font: inherit; letter-spacing: inherit; color: inherit; padding: 0; }
.defs { position: absolute; }

.arr { flex: none; display: block; width: 6px; height: 4px; margin: 0 1px; background: #444; clip-path: polygon(0 0, 100% 0, 50% 100%); }
.vsep { flex: none; width: 1px; height: 22px; margin: 0 1px; background: #b5b5b5; }

/* title bar */
.titlebar { flex: none; height: 29px; display: flex; color: #3c3c3c; }
.qat { width: 726px; padding-left: 2px; height: 24px; display: flex; align-items: center; gap: 4px; }
.qat svg { width: 20px; height: 20px; }
.qat .logo { height: 23px; align-self: flex-start; }
.gap5 { margin-left: 5px; }
.gap1 { margin-left: 4px; }
.tight { margin-left: -3px; }
.bar { width: 10px; height: 7px; margin-left: 4px; clip-path: polygon(0 0, 100% 0, 100% 18%, 0 18%, 0 42%, 100% 42%, 50% 100%, 0 42%, 0 0); }
.apptitle { width: 838px; line-height: 20px; letter-spacing: -0.245px; }
.account { flex: 1; height: 24px; display: flex; align-items: center; }
.tri { width: 6px; height: 10px; margin-right: 7px; margin-left: 5px; }
.i18 { width: 18px; height: 18px; }
.user { margin-left: 6px; }
.uname { margin-left: 4px; width: 85px; line-height: 24px; padding-top: 2px; letter-spacing: -0.2px; }
.cart { margin: 0 8px 0 9px; }
.help { margin: 0 7px 0 7px; }
.win { width: 66px; height: 18px; margin-left: 58px; }

/* ribbon tabs */
.tabs { flex: none; height: 20px; display: grid; grid-template-columns: 45px 89px 65px 46px 58px 63px 49px 69px 61px 99px 81px 45px 63px 62px 84px 59px auto; color: #3c3c3c; text-align: center; line-height: 20px; }
.file { background: #2a7ab8; color: #fff; }
.tabs .on { background: #eeeeee; color: #111; }
.toggle { width: 24px; height: 10px; margin: 6px 0 0 21px; }

/* ribbon */
.ribbon { flex: none; height: 96px; background: #eeeeee; border-bottom: 1px solid #c8c8c8; display: flex; color: #333; }
.panel { flex: none; display: flex; flex-direction: column; padding-top: 6px; background: linear-gradient(#d6d6d6, #d6d6d6) right 1px / 1px 93px no-repeat; }
.panel.last { background: none; }
.btns { height: 70px; display: flex; }
.panel h4 { height: 18px; text-align: center; line-height: 18px; }
.btn { display: flex; flex-direction: column; align-items: center; line-height: 15px; text-align: center; }
.btn > svg { width: 32px; height: 32px; overflow: visible; margin-bottom: 3px; }
.btn b { position: relative; }
.tall > svg { height: 22px; margin-bottom: 1px; overflow: hidden; }
.side { position: absolute; right: -9px; top: 15px; width: 5px; height: 3px; }
.tall .side { top: 22px; }
.down { margin-top: 3px; width: 5px; height: 3px; }
.lead5 { padding-left: 4px; }
.lead3 { padding-left: 3px; }
.p60 { width: 60px; } .p111 { width: 111px; } .p243 { width: 243px; } .p163 { width: 163px; } .p73 { width: 73px; } .p78 { width: 78px; } .p50 { width: 50px; } .p81 { width: 81px; } .p65 { width: 65px; } .p200 { width: 200px; } .p132 { width: 132px; } .p92 { width: 92px; } .p76 { width: 76px; } .p80 { width: 80px; } .p84 { width: 84px; }
.g1 { width: 100%; } .g48 { width: 48px; } .g58 { width: 58px; } .g68 { width: 68px; } .g57 { width: 57px; } .g61 { width: 61px; } .g52 { width: 52px; } .g40 { width: 40px; } .g42 { width: 42px; } .g34 { width: 34px; } .g44 { width: 44px; } .g86 { width: 86px; } .g54 { width: 54px; } .g60 { width: 60px; } .g66 { width: 66px; } .g64 { width: 62px; }
.optbar { flex: none; height: 28px; background: #eeeeee; border-bottom: 2px solid #cccccc; }

/* work area */
.work { flex: none; height: 835px; display: flex; }
.phead { height: 20px; display: flex; justify-content: space-between; align-items: center; padding: 1px 5px 0 3px; color: #444; letter-spacing: -0.1px; }
.x { width: 10px; height: 10px; }
.props { flex: none; width: 481px; border-right: 2px solid #cccccc; background: #eeeeee; display: flex; flex-direction: column; }
.typebox { margin: 0 2px 0 1px; height: 72px; border: 1px solid #cfcfcf; display: flex; align-items: center; padding: 0 1px 0 2px; color: #444; }
.thumb { width: 66px; height: 66px; border: 1px solid #c8c8c8; display: grid; place-items: center; margin-right: 4px; }
.thumb svg { width: 32px; height: 32px; }
.typebox span { flex: 1; letter-spacing: -0.15px; padding-top: 2px; }
.big { width: 8px; height: 5px; margin: 2px 0 0; }
.inst { height: 25px; display: flex; align-items: flex-start; padding: 1px 0 0 1px; }
.combo { width: 394px; height: 23px; background: #fdfdfd; border: 1px solid #cfcfcf; border-radius: 2px; display: flex; justify-content: space-between; align-items: center; padding: 0 3px; }
.cb { width: 10px; height: 6px; }
.et { width: 17px; height: 16px; margin: 1px 4px 0 6px; }
.ett { color: #222; line-height: 20px; letter-spacing: -0.2px; }
.gridwrap { height: 691px; overflow: hidden; display: flex; margin-left: 1px; }
.grid { width: 459px; }
.sec { height: 18px; background: #dadada; padding: 0 5px 0 2px; display: flex; justify-content: space-between; align-items: center; color: #111; }
.sec svg { width: 8px; height: 10px; }
.row { height: 18px; display: grid; grid-template-columns: 225px 222px 12px; background: #fff; line-height: 17px; }
.row > * { border-bottom: 1px dotted #777; border-right: 1px dotted #777; height: 18px; font-style: normal; }
.row > :first-child { padding-left: 8px; }
.row > :nth-child(2) { padding-left: 2px; }
.row.dim { color: #767676; }
.row > .sel { border: 1px solid #000; padding-left: 4px; line-height: 14px; width: 221px; }
.row > .in { padding-left: 5px; }
.row > .cell { padding: 1px 1px 0 1px; }
.cell button { display: block; width: 219px; height: 16px; line-height: 13px; background: #fdfdfd; border: 1px solid #cfcfcf; border-bottom: 2px solid #bdbdbd; border-radius: 4px; padding-right: 2px; }
.mini { display: block; width: 10px; height: 16px; margin: 1px 0 0; background: #fdfdfd; border: 1px solid #cfcfcf; border-bottom: 2px solid #bbb; border-radius: 3px; }
.ck svg, .ck em { display: block; width: 13px; height: 13px; margin: 3px 0 0 1px; }
.ck em { border: 1px solid #666; border-radius: 3px; background: #f3f3f3; }
.vthumb { width: 2px; height: 600px; margin: 17px 0 0 8px; background: #858585; }
.pfoot { flex: 1; display: flex; justify-content: space-between; padding: 3px 5px 0 3px; }
.pfoot a { color: #0563c1; text-decoration: underline; letter-spacing: -0.35px; }
.apply { width: 71px; height: 20px; background: #f8f8f8; border: 1px solid #e6e6e6; border-radius: 3px; color: #8a8a8a; letter-spacing: 0; }

.canvas { flex: none; width: 995px; display: flex; flex-direction: column; background: #fff; }
.vtabs { height: 20px; background: #cccccc; display: flex; justify-content: space-between; align-items: center; padding-right: 4px; }
.vtab { width: 242px; height: 20px; background: #fff; display: flex; align-items: center; padding-left: 5px; font-weight: 700; color: #222; }
.vtab span { flex: 1; margin-left: 7px; padding-top: 1px; }
.vtab .x { margin-right: 5px; }
.i16 { width: 16px; height: 16px; }
.sheetrow { height: 796px; display: flex; }
.sheet { position: relative; width: 977px; }
.tag text { font: 22px "Liberation Sans", Arial, sans-serif; text-anchor: middle; fill: #000; }
.vscroll { width: 16px; margin-top: 2px; background: #efefef; display: grid; place-items: center; }
.vscroll i { width: 2px; height: 17px; background: #777; }
.navbar { position: absolute; right: 1px; top: 2px; width: 36px; height: 118px; border: 2px solid #cbcbcb; border-radius: 5px; background: #f4f4f4; display: flex; flex-direction: column; align-items: center; }
.nclose { width: 9px; height: 9px; align-self: flex-end; margin: 1px 2px 9px 0; }
.wheel { width: 26px; height: 25px; margin: 0 0 5px 0; }
.gray { background: #999; width: 5px; height: 3px; }
.nsep { width: 26px; height: 1px; background: #bbb; margin: 5px 0 8px; }
.zoomi { width: 18px; height: 18px; margin-bottom: 8px; }
.low { margin: 12px 2px 0 0; }
.viewctl { flex: 1; margin-left: 2px; background: #f0f0f0; border-bottom: 2px solid #fff; display: flex; align-items: center; }
.scale { width: 68px; padding-left: 11px; margin-right: 11px; letter-spacing: -0.5px; }
.viewctl svg { width: 16px; height: 14px; margin-right: 5px; }
.hthumb { width: 17px; height: 2px; background: #888; margin-left: 323px; }
.viewctl .grip { width: 9px; height: 9px; margin: 5px 3px 0 auto; }

.browser { flex: none; width: 444px; border-left: 2px solid #cccccc; background: #eeeeee; display: flex; flex-direction: column; }
.browser .phead { padding: 1px 3px 0 4px; letter-spacing: -0.29px; }
.treewrap { height: 798px; display: flex; }
.treebox { width: 425px; margin-left: 2px; overflow: hidden; background: #fff; }
.tree { width: 425px; }
.tree li { position: relative; }
.tree li::before { content: ""; position: absolute; left: 7px; top: 0; bottom: 0; border-left: 1px dotted #999; }
.tree li:last-child:not(.more)::before { bottom: auto; height: 11px; }
.tree ul { margin-left: 20px; }
.tree p { position: relative; height: 18px; padding-left: 26px; display: flex; align-items: center; }
.tree p::before { content: ""; position: absolute; left: 8px; top: 10px; width: 14px; border-top: 1px dotted #999; }
.tree .ic::before { width: 11px; }
.tree .ic svg { width: 16px; height: 16px; margin: 0 6px 0 -6px; }
.pl::after, .m::after { content: ""; position: absolute; left: 3px; top: 6px; width: 9px; height: 9px; border: 1px solid #888; border-radius: 1px; background: linear-gradient(#2e4f9e, #2e4f9e) center / 5px 1px no-repeat, #f6f6f6; }
.pl::after { background: linear-gradient(#2e4f9e, #2e4f9e) center / 5px 1px no-repeat, linear-gradient(#2e4f9e, #2e4f9e) center / 1px 5px no-repeat, #f6f6f6; }
.hl { background: #e0e0e0; padding: 0 3px; margin-left: -3px; }
.cur { font-weight: 700; letter-spacing: -0.5px; }
.bthumb { width: 2px; height: 198px; margin: 17px 0 0 7px; background: #858585; }
.bscroll { flex: 1; padding: 7px 0 0 19px; }
.bscroll i { display: block; width: 338px; height: 2px; background: #858585; }

/* status bar */
.status { flex: none; height: 24px; background: #cbcbcb; display: flex; align-items: center; padding-top: 2px; }
.msg { width: 895px; padding-left: 2px; letter-spacing: -0.31px; }
.status svg { width: 18px; height: 18px; }
.status .cb { width: 10px; height: 6px; }
.scombo { height: 18px; background: #fdfdfd; border: 1px solid #ddd; display: flex; justify-content: flex-end; align-items: center; padding: 0 3px; color: #777; }
.scombo span { flex: 1; letter-spacing: 0; }
.a { width: 204px; margin-left: 8px; }
.status .s2 { margin-left: 7px; }
.cnt { width: 36px; padding-left: 2px; }
.status .s3 { margin-left: -1px; }
.status .s4 { margin: 0 7px 0 8px; }
.b { width: 204px; }
.sel-tools { display: flex; align-items: center; margin-left: 227px; color: #333; }
.sel-tools svg { margin-right: 7.500px; }
.sel-tools span { margin-left: -6px; }
```
